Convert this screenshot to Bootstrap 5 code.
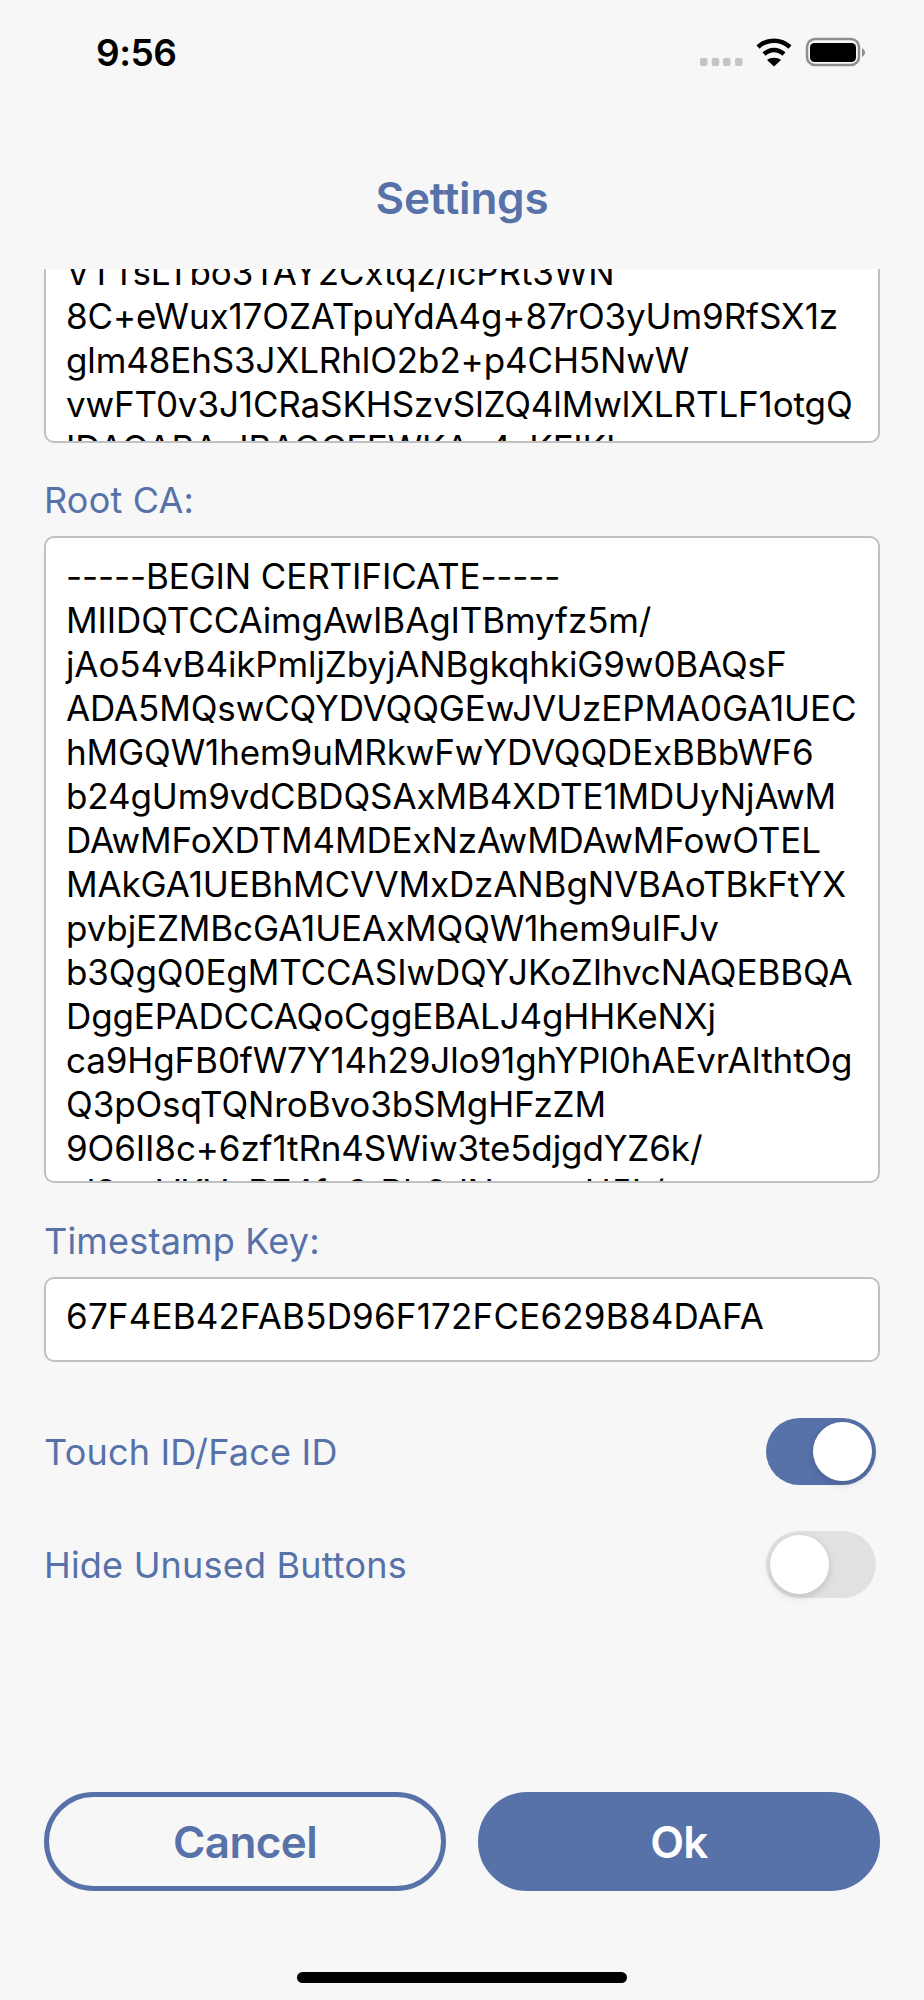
<!DOCTYPE html>
<html lang="en">
<head>
    <meta charset="UTF-8">
    <title>Settings</title>
    <link href="https://cdn.jsdelivr.net/npm/bootstrap@5.3.0/dist/css/bootstrap.min.css" rel="stylesheet">
    <style>
        body { font-family: Inter, "Liberation Sans", sans-serif; background-color: #f7f7f7; color: #000; }
        .screen { width: 924px; height: 2000px; overflow: hidden; }
        .status-bar { height: 106px; padding: 0 54px 0 96px; }
        .clock { font-size: 37px; font-weight: 600; line-height: 44px; letter-spacing: -0.5px; margin-top: 31px; }
        .status-icons { margin-top: 30px; }
        .title-bar { height: 163px; padding-top: 62px; text-align: center; font-size: 44px; font-weight: 600; line-height: 60px; letter-spacing: -0.2px; color: #5771a9; }
        .settings-body { padding: 0 44px; }
        .field-label { display: block; font-size: 36px; line-height: 44px; letter-spacing: 0.2px; color: #5771a9; margin: 0; }
        .cert-box { background: #fff; border: 2px solid #c0c0c0; border-radius: 10px; padding: 0 20px; font-size: 35px; line-height: 44px; letter-spacing: -0.12px; white-space: pre; overflow: hidden; }
        .cert-top { height: 174px; border-top: 0; border-top-left-radius: 0; border-top-right-radius: 0; margin-bottom: 35px; }
        .cert-top-lines { margin-top: -19px; }
        .cert-root { height: 647px; padding-top: 16px; margin-top: 14px; margin-bottom: 36px; }
        .key-box { height: 85px; line-height: 74px; margin-top: 14px; letter-spacing: 0.18px; }
        .toggle-row { height: 67px; padding-right: 4px; }
        .toggle-first { margin-top: 56px; }
        .toggle-next { margin-top: 46px; }
        .toggle-pill { width: 110px; height: 67px; border-radius: 34px; position: relative; }
        .toggle-on { background: #5771a9; }
        .toggle-off { background: #e1e1e1; }
        .toggle-knob { position: absolute; top: 4px; width: 59px; height: 59px; border-radius: 50%; background: #fff; box-shadow: 0 3px 8px rgba(0,0,0,.15); }
        .toggle-on .toggle-knob { right: 4px; }
        .toggle-off .toggle-knob { left: 4px; }
        .action-btn { width: 402px; height: 99px; border-radius: 50px; border: 5px solid #5771a9; font-size: 44px; font-weight: 600; letter-spacing: -0.6px; padding: 0; }
        .action-btn.btn-cancel { background: transparent; color: #5771a9; }
        .action-btn.btn-ok { background: #5771a9; color: #fff; }
        .home-bar { width: 330px; height: 11px; border-radius: 6px; background: #000; margin: 81px auto 17px; }
    </style>
</head>
<body>
    <div class="screen d-flex flex-column">
        <div class="status-bar d-flex justify-content-between align-items-start">
            <div class="clock">9:56</div>
            <svg class="status-icons" width="180" height="44" viewBox="0 0 180 44">
                <g fill="#c4c4c4">
                    <rect x="10" y="28" width="7.500" height="8" rx="2"/>
                    <rect x="21.700" y="28" width="7.500" height="8" rx="2"/>
                    <rect x="33" y="28" width="7.500" height="8" rx="2"/>
                    <rect x="45" y="28" width="7.500" height="8" rx="2"/>
                </g>
                <path d="M68 17C77 8.500 91 8.500 100 17" fill="none" stroke="#000" stroke-width="4.500"/>
                <path d="M74 24C80 18.500 88 18.500 94 24" fill="none" stroke="#000" stroke-width="4.500"/>
                <path d="M77 30C81 27 87 27 91 30L84 36.500Z" fill="#000"/>
                <rect x="117" y="9" width="52" height="26" rx="8" fill="none" stroke="#8e8e8e" stroke-width="2.500"/>
                <rect x="120" y="13" width="46" height="19" rx="4.500" fill="#000"/>
                <path d="M172 18C174 19 175 21 175 22.500C175 24 174 26 172 27Z" fill="#8e8e8e"/>
            </svg>
        </div>
        <div class="title-bar">Settings</div>
        <div class="settings-body flex-grow-1">
            <div class="cert-box cert-top"><div class="cert-top-lines">VTTsLTbo3TAY2Cxtqz/lcPRt3WN
8C+eWux17OZATpuYdA4g+87rO3yUm9RfSX1z
glm48EhS3JXLRhlO2b2+p4CH5NwW
vwFT0v3J1CRaSKHSzvSlZQ4lMwlXLRTLF1otgQ
IDAQABAoIBAQCFEWKAx4sKFIKL</div></div>
            <label class="field-label">Root CA:</label>
            <div class="cert-box cert-root">-----BEGIN CERTIFICATE-----
MIIDQTCCAimgAwIBAgITBmyfz5m/
jAo54vB4ikPmljZbyjANBgkqhkiG9w0BAQsF
ADA5MQswCQYDVQQGEwJVUzEPMA0GA1UEC
hMGQW1hem9uMRkwFwYDVQQDExBBbWF6
b24gUm9vdCBDQSAxMB4XDTE1MDUyNjAwM
DAwMFoXDTM4MDExNzAwMDAwMFowOTEL
MAkGA1UEBhMCVVMxDzANBgNVBAoTBkFtYX
pvbjEZMBcGA1UEAxMQQW1hem9uIFJv
b3QgQ0EgMTCCASIwDQYJKoZIhvcNAQEBBQA
DggEPADCCAQoCggEBALJ4gHHKeNXj
ca9HgFB0fW7Y14h29Jlo91ghYPl0hAEvrAIthtOg
Q3pOsqTQNroBvo3bSMgHFzZM
9O6II8c+6zf1tRn4SWiw3te5djgdYZ6k/
ol2peVKVuRF4fn9tBb6dNqcmzU5L/</div>
            <label class="field-label">Timestamp Key:</label>
            <div class="cert-box key-box">67F4EB42FAB5D96F172FCE629B84DAFA</div>
            <div class="toggle-row toggle-first d-flex justify-content-between align-items-center">
                <span class="field-label">Touch ID/Face ID</span>
                <div class="toggle-pill toggle-on"><div class="toggle-knob"></div></div>
            </div>
            <div class="toggle-row toggle-next d-flex justify-content-between align-items-center">
                <span class="field-label">Hide Unused Buttons</span>
                <div class="toggle-pill toggle-off"><div class="toggle-knob"></div></div>
            </div>
        </div>
        <div class="settings-body d-flex justify-content-between">
            <button type="button" class="btn action-btn btn-cancel">Cancel</button>
            <button type="button" class="btn action-btn btn-ok">Ok</button>
        </div>
        <div class="home-bar"></div>
    </div>
    <script src="https://cdn.jsdelivr.net/npm/bootstrap@5.3.0/dist/js/bootstrap.bundle.min.js"></script>
</body>
</html>
